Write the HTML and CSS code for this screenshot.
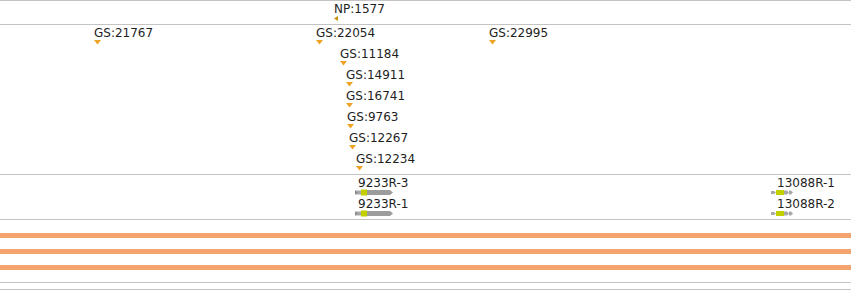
FILE: index.html
```html
<!DOCTYPE html>
<html>
<head>
<meta charset="utf-8">
<link rel="stylesheet" href="styles.css">
</head>
<body>
<div class="tracks">
  <div class="track track-np">
    <div class="feat" style="left:334px;top:1px">
      <span class="label">NP:1577</span>
      <svg class="tri-left" width="4" height="5" viewBox="0 0 4 5"><polygon points="0,2.5 4,0 4,5" /></svg>
    </div>
  </div>
  <div class="track track-gs">
    <div class="feat" style="left:94px;top:1px"><span class="label">GS:21767</span><svg class="tri-down" width="7" height="5" viewBox="0 0 7 5"><polygon points="0,0 7,0 3.5,4.5" /></svg></div>
    <div class="feat" style="left:316px;top:1px"><span class="label">GS:22054</span><svg class="tri-down" width="7" height="5" viewBox="0 0 7 5"><polygon points="0,0 7,0 3.5,4.5" /></svg></div>
    <div class="feat" style="left:489px;top:1px"><span class="label">GS:22995</span><svg class="tri-down" width="7" height="5" viewBox="0 0 7 5"><polygon points="0,0 7,0 3.5,4.5" /></svg></div>
    <div class="feat" style="left:340px;top:22px"><span class="label">GS:11184</span><svg class="tri-down" width="7" height="5" viewBox="0 0 7 5"><polygon points="0,0 7,0 3.5,4.5" /></svg></div>
    <div class="feat" style="left:346px;top:43px"><span class="label">GS:14911</span><svg class="tri-down" width="7" height="5" viewBox="0 0 7 5"><polygon points="0,0 7,0 3.5,4.5" /></svg></div>
    <div class="feat" style="left:346px;top:64px"><span class="label">GS:16741</span><svg class="tri-down" width="7" height="5" viewBox="0 0 7 5"><polygon points="0,0 7,0 3.5,4.5" /></svg></div>
    <div class="feat" style="left:347px;top:85px"><span class="label">GS:9763</span><svg class="tri-down" width="7" height="5" viewBox="0 0 7 5"><polygon points="0,0 7,0 3.5,4.5" /></svg></div>
    <div class="feat" style="left:349px;top:106px"><span class="label">GS:12267</span><svg class="tri-down" width="7" height="5" viewBox="0 0 7 5"><polygon points="0,0 7,0 3.5,4.5" /></svg></div>
    <div class="feat" style="left:356px;top:127px"><span class="label">GS:12234</span><svg class="tri-down" width="7" height="5" viewBox="0 0 7 5"><polygon points="0,0 7,0 3.5,4.5" /></svg></div>
  </div>
  <div class="track track-genes">
    <div class="feat" style="left:355px;top:1px">
      <span class="label label-g1">9233R-3</span>
      <svg class="gene" width="39" height="7" viewBox="0 0 39 7">
        <polygon class="utr" points="0,1.5 6,1.5 6,5.5 0,5.5" />
        <polygon class="utr-dark" points="0,1.5 3,3.5 0,5.5" />
        <rect class="cds" x="6" y="0.5" width="6" height="6" />
        <polygon class="body" points="12,1 35,1 38,3.5 35,6 12,6" />
      </svg>
    </div>
    <div class="feat" style="left:355px;top:22px">
      <span class="label label-g1">9233R-1</span>
      <svg class="gene" width="39" height="7" viewBox="0 0 39 7">
        <polygon class="utr" points="0,1.5 6,1.5 6,5.5 0,5.5" />
        <polygon class="utr-dark" points="0,1.5 3,3.5 0,5.5" />
        <rect class="cds" x="6" y="0.5" width="6" height="6" />
        <polygon class="body" points="12,1 35,1 38,3.5 35,6 12,6" />
      </svg>
    </div>
    <div class="feat" style="left:771px;top:1px">
      <span class="label label-g2">13088R-1</span>
      <svg class="gene" width="23" height="7" viewBox="0 0 23 7">
        <polygon class="utr" points="0,2 3,2 5,3.5 3,5 0,5" />
        <rect class="cds" x="5" y="1" width="8" height="5" />
        <polygon class="utr" points="13,1.5 16,1.5 18,3.5 16,5.5 13,5.5" />
        <polygon class="utr" points="18,1.5 20,1.5 22,3.5 20,5.5 18,5.5" />
      </svg>
    </div>
    <div class="feat" style="left:771px;top:22px">
      <span class="label label-g2">13088R-2</span>
      <svg class="gene" width="23" height="7" viewBox="0 0 23 7">
        <polygon class="utr" points="0,2 3,2 5,3.5 3,5 0,5" />
        <rect class="cds" x="5" y="1" width="8" height="5" />
        <polygon class="utr" points="13,1.5 16,1.5 18,3.5 16,5.5 13,5.5" />
        <polygon class="utr" points="18,1.5 20,1.5 22,3.5 20,5.5 18,5.5" />
      </svg>
    </div>
  </div>
  <div class="track track-bars">
    <div class="bar"></div>
    <div class="bar"></div>
    <div class="bar"></div>
  </div>
  <div class="track track-empty"></div>
</div>
</body>
</html>
```

FILE: styles.css
```css
html, body {
  margin: 0;
  padding: 0;
  background: #ffffff;
}

body {
  width: 851px;
  height: 291px;
  overflow: hidden;
  font-family: "DejaVu Sans", Verdana, sans-serif;
  font-size: 12px;
  color: #1e1e1e;
}

.tracks {
  display: flex;
  flex-direction: column;
  border-top: 1px solid #c4c4c4;
}

.track {
  position: relative;
  border-bottom: 1px solid #c4c4c4;
}

.track-np { height: 23px; }
.track-gs { height: 149px; }
.track-genes { height: 44px; }
.track-bars {
  height: 63px;
  box-sizing: border-box;
  padding-top: 13px;
  display: flex;
  flex-direction: column;
  gap: 11px;
}
.track-empty { height: 6px; }

.bar {
  height: 5px;
  background: #f4a46e;
}

.feat {
  position: absolute;
  display: flex;
  flex-direction: column;
  align-items: flex-start;
}

.label {
  display: block;
  line-height: 14px;
  height: 14px;
  white-space: nowrap;
}

.label-g1 { margin-left: 3px; }
.label-g2 { margin-left: 6px; }

.feat svg { display: block; }

.tri-down polygon { fill: #eea326; }
.tri-left polygon { fill: #c8920e; }

.gene { margin-top: -1px; }
.gene .utr { fill: #a8a8a8; }
.gene .utr-dark { fill: #8c8c8c; }
.gene .cds { fill: #c2d000; }
.gene .body { fill: #9c9c9c; }
```
